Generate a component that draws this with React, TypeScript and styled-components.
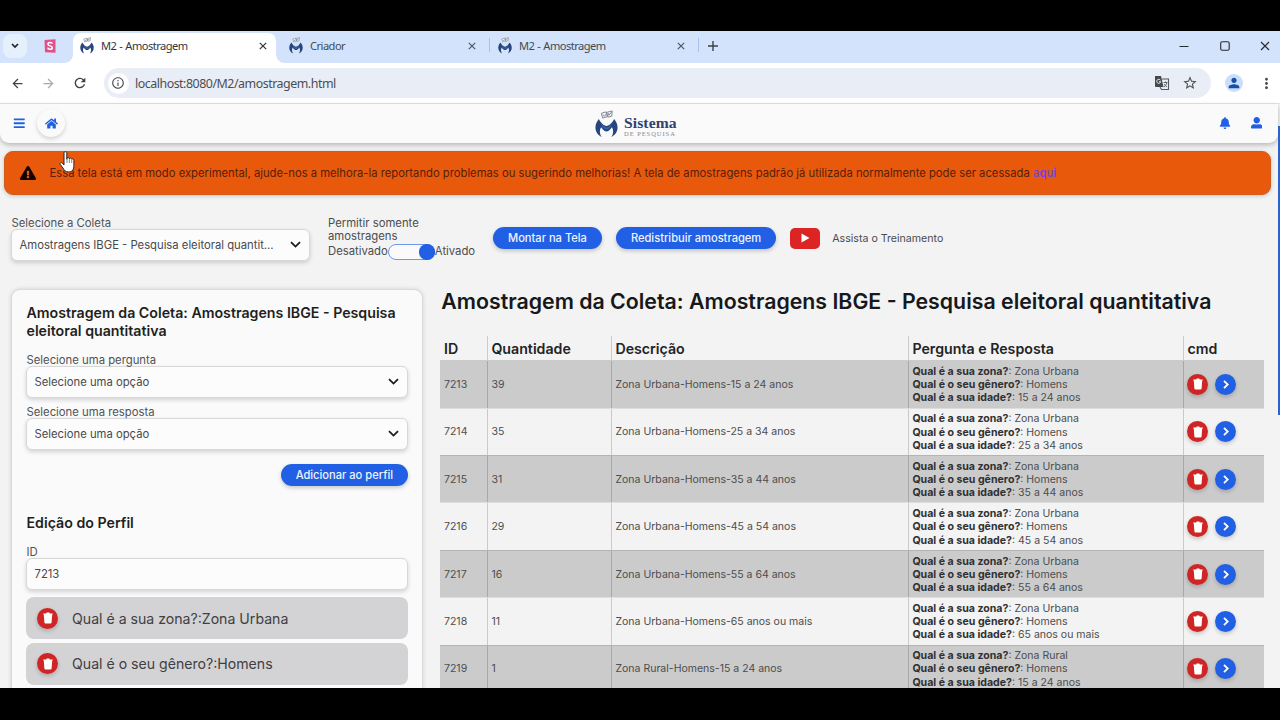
import React from "react";
import styled, { createGlobalStyle, css } from "styled-components";
import { FaBars, FaBell, FaUserAlt, FaHome, FaExclamationTriangle } from "react-icons/fa";
import { MdStarBorder, MdPerson, MdMoreVert, MdArrowBack, MdArrowForward, MdRefresh, MdInfoOutline } from "react-icons/md";

const blue = "#2160e4";
const red = "#cf2525";

const GlobalStyle = createGlobalStyle`
  * { box-sizing: border-box; }
  body { margin: 0; background: #000; overflow: hidden; }
`;

const Screen = styled.div`
  width: 1280px;
  height: 720px;
  padding: 31px 0 32px;
  background: #000;
  overflow: hidden;
  position: relative;
  font-family: Inter, "Liberation Sans", sans-serif;
`;

const Browser = styled.div`
  height: 657px;
  overflow: hidden;
  background: #f3f3f3;
  display: flex;
  flex-direction: column;
`;

const TabStrip = styled.div`
  height: 32px;
  flex: none;
  background: #d3e3fb;
  display: flex;
  align-items: center;
  padding-left: 3px;
  font: 11.1px "Noto Sans", "Open Sans", sans-serif;
  letter-spacing: -0.52px;
  word-spacing: 0.6px;
  color: #454a52;
`;

const TabSearch = styled.div`
  width: 24px;
  height: 24px;
  margin-top: -3px;
  border-radius: 8px;
  background: #e6effc;
  display: grid;
  place-items: center;
`;

const PinnedTab = styled.div`
  width: 46px;
  display: flex;
  justify-content: center;
  margin-top: -3px;
`;

const Tab = styled.div<{ $w: number; $left?: number; $active?: boolean }>`
  width: ${(p) => p.$w}px;
  height: 32px;
  padding: 0 13px 3px ${(p) => p.$left ?? 8}px;
  display: flex;
  align-items: center;
  position: relative;
  ${(p) =>
    p.$active &&
    css`
      height: 30px;
      align-self: flex-end;
      padding-right: 9px;
      padding-bottom: 5px;
      background: #fff;
      border-radius: 8px 8px 0 0;
      color: #33373c;
      &::before, &::after {
        content: "";
        position: absolute;
        bottom: 0;
        width: 8px;
        height: 8px;
      }
      &::before { left: -8px; background: radial-gradient(circle at 0 0, #d3e3fb 7.5px, #fff 8px); }
      &::after { right: -8px; background: radial-gradient(circle at 100% 0, #d3e3fb 7.5px, #fff 8px); }
    `}
`;

const TabTitle = styled.span`
  flex: 1;
  margin-left: 7px;
  white-space: nowrap;
`;

const TabDivider = styled.div`
  width: 1px;
  height: 14px;
  margin-top: -4px;
  background: #a5c3ef;
`;

const NewTab = styled.div`
  width: 28px;
  height: 14px;
  margin-top: -3px;
  display: grid;
  place-items: center;
`;

const WindowButtons = styled.div`
  margin-left: auto;
  margin-top: -3px;
  width: 101px;
  padding-right: 10px;
  display: flex;
  align-items: center;
  justify-content: space-between;
`;

const AddressRow = styled.div`
  height: 41px;
  flex: none;
  background: #fff;
  border-bottom: 1px solid #e4e4e4;
  display: flex;
  align-items: center;
  padding: 0 5px 0 9px;
  color: #474a4d;
`;

const NavIcon = styled.div<{ $dim?: boolean }>`
  width: 16px;
  flex: none;
  margin-right: 15.5px;
  display: grid;
  place-items: center;
  color: ${(p) => (p.$dim ? "#a8aaad" : "#3f4245")};
`;

const AddressBar = styled.div`
  width: 1107px;
  flex: none;
  height: 30px;
  border-radius: 15px;
  background: #e9edf5;
  display: flex;
  align-items: center;
  padding: 0 12.5px 0 4px;
  font: 12.4px "Noto Sans", "Open Sans", sans-serif;
  letter-spacing: -0.47px;
  color: #4b4f54;
`;

const SiteInfo = styled.div`
  width: 21px;
  height: 21px;
  border-radius: 50%;
  background: #fff;
  display: grid;
  place-items: center;
  margin-right: 6.5px;
`;

const Url = styled.span`
  flex: 1;
`;

const AddressIcons = styled.div`
  display: flex;
  gap: 12px;
  align-items: center;
`;

const Avatar = styled.div`
  width: 18px;
  height: 18px;
  flex: none;
  margin: 0 14.5px 0 14.5px;
  border-radius: 50%;
  background: #c9defb;
  color: #174fa8;
  display: grid;
  place-items: center;
`;

const AppHeader = styled.header`
  width: 1278px;
  height: 39px;
  flex: none;
  background: #fafafa;
  border-radius: 0 0 9px 9px;
  box-shadow: 0 2px 5px rgba(0, 0, 0, 0.25);
  display: grid;
  grid-template-columns: 1fr auto 1fr;
  align-items: center;
  padding: 0 16px 0 13px;
  color: ${blue};
`;

const HeaderGroup = styled.div<{ $end?: boolean }>`
  display: flex;
  align-items: center;
  padding-bottom: 1px;
  gap: ${(p) => (p.$end ? 20 : 11.5)}px;
  justify-content: ${(p) => (p.$end ? "flex-end" : "flex-start")};
`;

const HomeButton = styled.div`
  width: 28px;
  height: 28px;
  border-radius: 50%;
  background: #fafafa;
  box-shadow: 0 2px 4px rgba(0, 0, 0, 0.16);
  display: grid;
  place-items: center;
`;

const Brand = styled.div`
  display: flex;
  align-items: center;
  gap: 6px;
  margin-right: 3px;
`;

const BrandText = styled.div`
  padding-top: 5px;
  width: 53px;
`;

const BrandName = styled.div`
  font: bold 15.6px/14px "Liberation Serif", serif;
  letter-spacing: 0.1px;
  color: #2e4270;
`;

const BrandSub = styled.div`
  font: 6.5px/7px "Liberation Serif", serif;
  letter-spacing: 0.95px;
  color: #85888f;
  white-space: nowrap;
`;

const Alert = styled.div`
  width: 1267px;
  height: 44px;
  flex: none;
  margin: 8px 0 0 4px;
  padding: 0 14.5px;
  border: 1px solid #cf5c1d;
  border-radius: 9px;
  background: #e9590c;
  box-shadow: 0 1px 4px rgba(0, 0, 0, 0.2);
  display: flex;
  align-items: center;
  gap: 14px;
  font-size: 11.25px;
  color: #56200a;
  white-space: nowrap;
`;

const AlertLink = styled.a`
  color: #7645d6;
  font-weight: 600;
`;

const Filters = styled.section`
  height: 94px;
  flex: none;
  display: flex;
  padding: 20px 11px 0;
  font-size: 11.3px;
  color: #4a4c4f;
`;

const Field = styled.div<{ $w: number; $mt?: number }>`
  width: ${(p) => p.$w}px;
  margin-top: ${(p) => p.$mt ?? 0}px;
`;

const Label = styled.div`
  height: 14px;
  padding: 1px 0 0 0.5px;
  font-size: 11.3px;
  line-height: 14px;
  color: #505254;
`;

const Control = styled.div`
  height: 32px;
  border: 1px solid #d8d8d8;
  border-radius: 6px;
  background: #fcfcfc;
  box-shadow: 0 2px 4px rgba(0, 0, 0, 0.16);
  display: flex;
  align-items: center;
  justify-content: space-between;
  padding: 0 8px 1px 7.5px;
  font-size: 11.28px;
  color: #48494b;
  white-space: nowrap;
`;

const ToggleField = styled.div`
  width: 165px;
  margin-left: 18px;
  line-height: 13.2px;
  padding-top: 2px;
`;

const ToggleRow = styled.div`
  display: flex;
  align-items: center;
  height: 17px;
`;

const Switch = styled.div`
  width: 47px;
  height: 15.5px;
  border: 1px solid #6d98ec;
  border-radius: 8px;
  background: #fafafa;
  display: flex;
  justify-content: flex-end;
  align-items: center;
`;

const Knob = styled.div`
  width: 15.5px;
  height: 15.5px;
  flex: none;
  border-radius: 50%;
  margin-right: -1px;
  background: ${blue};
`;

const Button = styled.button`
  height: 22px;
  border: 0;
  border-radius: 11px;
  padding: 0 15px;
  background: ${blue};
  box-shadow: 0 2px 4px rgba(0, 0, 0, 0.2);
  color: #eef3fd;
  font: 500 11.12px Inter, sans-serif;
  white-space: nowrap;
`;

const Actions = styled.div`
  height: 22px;
  margin-top: 12px;
  display: flex;
  align-items: center;
  gap: 14px;
`;

const Training = styled.div`
  display: flex;
  align-items: center;
  gap: 12px;
  font-size: 10.62px;
`;

const Youtube = styled.div`
  width: 30px;
  height: 21px;
  border-radius: 5px;
  background: #dc2424;
  display: grid;
  place-items: center;
`;

const Columns = styled.div`
  display: flex;
  align-items: flex-start;
  padding-left: 11px;
`;

const Card = styled.aside`
  width: 412px;
  height: 460px;
  border: 1px solid #dadada;
  border-radius: 9px;
  background: #fafafa;
  box-shadow: 0 0 4px rgba(0, 0, 0, 0.14);
  padding: 14px;
`;

const CardTitle = styled.h3<{ $mt?: number }>`
  margin: ${(p) => p.$mt ?? 0}px 0 0;
  padding-left: 0.5px;
  font-size: 14.2px;
  line-height: 17.6px;
  font-weight: 600;
  color: #1e1f21;
`;

const ButtonLine = styled.div`
  margin-top: 14px;
  display: flex;
  justify-content: flex-end;
`;

const ProfileItem = styled.div<{ $mt?: number }>`
  height: 42px;
  margin-top: ${(p) => p.$mt ?? 3.6}px;
  border-radius: 8px;
  background: #d3d3d5;
  display: flex;
  align-items: center;
  gap: 14px;
  padding-left: 11px;
  font-size: 14.12px;
  color: #3f4042;
`;

const Round = styled.div<{ $color: string }>`
  width: 21px;
  height: 21px;
  border-radius: 50%;
  flex: none;
  background: ${(p) => p.$color};
  box-shadow: 0 2px 4px rgba(0, 0, 0, 0.2);
  color: #fff;
  display: grid;
  place-items: center;
`;

const Main = styled.main`
  width: 824px;
  margin-left: 17px;
`;

const Title = styled.h2`
  margin: 0 0 0 1.3px;
  height: 47px;
  font-size: 21.32px;
  line-height: 25px;
  font-weight: 600;
  color: #17181a;
  white-space: nowrap;
`;

const Row = styled.div<{ $shade?: boolean; $head?: boolean; $first?: boolean }>`
  display: grid;
  grid-template-columns: 47px 124px 297px 275px 1fr;
  height: ${(p) => (p.$head ? 24.3 : 47.4)}px;
  background: ${(p) => (p.$shade ? "#cbcbcb" : "transparent")};
  border-top: ${(p) => (p.$head ? 0 : 1)}px solid
    ${(p) => (p.$first ? "#cbcbcb" : p.$shade ? "#b4b4b4" : "#dedede")};
  font-size: ${(p) => (p.$head ? 14.2 : 10.53)}px;
  font-weight: ${(p) => (p.$head ? 600 : 400)};
  color: ${(p) => (p.$head ? "#222325" : "#4c4d4f")};
`;

const Cell = styled.div`
  display: flex;
  align-items: center;
  padding-left: 4px;
  gap: 7px;
  white-space: nowrap;
  & + & { border-left: 1px solid rgba(0, 0, 0, 0.17); padding-left: 3.4px; }
`;

const Answers = styled.div`
  line-height: 13.2px;
  padding-top: 0.5px;
  b { font-weight: 700; color: #303133; font-size: 10.6px; }
`;

const ScrollThumb = styled.div`
  position: absolute;
  right: 0;
  top: 126px;
  width: 2px;
  height: 289px;
  background: #2b62d2;
`;

const Pointer = styled.svg`
  position: absolute;
  left: 59px;
  top: 151px;
`;

const Mark = ({ size = 14 }: { size?: number }) => (
  <svg width={size} height={size * 1.2} viewBox="0 0 24 29">
    <g fill="#f4f5f8" stroke="#7d8391" strokeWidth="1">
      <path d="M6.500 3.500l5-1.500 1.500 5-5 1.500zM12 2.500l6-1.500-.5 5.500-4 1z" />
      <path d="M8 5l2 1.500L12 4M13.500 3l1 2.500L17.500 2" fill="none" />
    </g>
    <path
      d="M4 9.500C-1 15-1.500 24 7 28.500 4.500 25 4.500 21 6.300 18 8.300 21 10.500 22.500 12 22.500s3.700-1.500 5.700-4.500c1.800 3 1.800 7-.7 10.500C25.500 24 25 15 20 9.500 18 13.500 15 16.500 12 16.800 9 16.500 6 13.500 4 9.500z"
      fill="#27447f"
    />
    <path d="M6.500 14.500c2 2.500 4 3.800 5.500 3.800s3.500-1.300 5.500-3.800c-.8 3.500-3 6-5.500 6s-4.700-2.500-5.500-6z" fill="#2f68aa" />
  </svg>
);

const CloseX = ({ size = 8, color = "#303439", w = 1.5 }) => (
  <svg width={size} height={size} viewBox="0 0 10 10" stroke={color} strokeWidth={w}>
    <path d="M1 1l8 8M9 1L1 9" />
  </svg>
);

const Chevron = ({ size = 11 }: { size?: number }) => (
  <svg width={size} height={size * 0.64} viewBox="0 0 11 7" fill="none" stroke="#1c1d1f" strokeWidth="1.8">
    <path d="M1 1l4.500 4.500L10 1" />
  </svg>
);

const Translate = () => (
  <svg width="16" height="16" viewBox="0 0 16 16" fill="none">
    <path d="M8 4h6.500v10.500H7.500L6 12" stroke="#55585c" strokeWidth="1.100" />
    <path d="M1 1h6l2.500 11H2a1 1 0 0 1-1-1z" fill="#45484c" />
    <path d="M6.400 5.200a2 2 0 1 0 .3 1.500H5" stroke="#e9edf5" strokeWidth="1" />
    <path d="M9.500 7.500h4M11.500 6.500v1M12.800 7.500c-.4 2-1.500 3.500-3 4.500M10.300 9c.6 1.300 1.500 2.200 2.700 3" stroke="#55585c" strokeWidth=".9" />
  </svg>
);

const Delete = () => (
  <Round $color={red}>
    <svg width="10" height="12" viewBox="0 0 10 12" fill="#fff">
      <path d="M.3 1.400h2.900L3.700.6h2.600l.5.800h2.900v1.200H9.200l-.6 7.900c-.1.700-.5 1.100-1.200 1.100H2.600c-.7 0-1.100-.4-1.200-1.100L.8 2.600H.3z" />
    </svg>
  </Round>
);

const Open = () => (
  <Round $color={blue}>
    <svg width="6" height="9" viewBox="0 0 6 9" fill="none" stroke="#fff" strokeWidth="1.800">
      <path d="M1 .8l3.700 3.700L1 8.200" />
    </svg>
  </Round>
);

const rows = [
  { id: 7213, qty: 39, zone: "Urbana", age: "15 a 24 anos" },
  { id: 7214, qty: 35, zone: "Urbana", age: "25 a 34 anos" },
  { id: 7215, qty: 31, zone: "Urbana", age: "35 a 44 anos" },
  { id: 7216, qty: 29, zone: "Urbana", age: "45 a 54 anos" },
  { id: 7217, qty: 16, zone: "Urbana", age: "55 a 64 anos" },
  { id: 7218, qty: 11, zone: "Urbana", age: "65 anos ou mais" },
  { id: 7219, qty: 1, zone: "Rural", age: "15 a 24 anos" },
];

export default function App() {
  return (
    <Screen>
      <GlobalStyle />
      <Browser>
        <TabStrip>
          <TabSearch>
            <svg width="8" height="6" viewBox="0 0 8 6" fill="none" stroke="#202429" strokeWidth="1.700">
              <path d="M1 1l3 3 3-3" />
            </svg>
          </TabSearch>
          <PinnedTab>
            <svg width="12" height="14" viewBox="0 0 12 14">
              <path d="M.5 1L11.500.3v13.400L1 13.200z" fill="#e2508a" />
              <path d="M8.300 4.600C7.800 3 3.900 3 3.900 5.200c0 2 4.400 1.400 4.400 3.500 0 2.100-4.200 2.100-4.600 0" fill="none" stroke="#fff" strokeWidth="1.500" />
            </svg>
          </PinnedTab>
          <Tab $w={203} $left={7} $active>
            <Mark />
            <TabTitle>M2 - Amostragem</TabTitle>
            <CloseX />
          </Tab>
          <Tab $w={213} $left={13}>
            <Mark />
            <TabTitle>Criador</TabTitle>
            <CloseX color="#50565f" />
          </Tab>
          <TabDivider />
          <Tab $w={208}>
            <Mark />
            <TabTitle>M2 - Amostragem</TabTitle>
            <CloseX color="#50565f" />
          </Tab>
          <TabDivider />
          <NewTab>
            <svg width="10" height="10" viewBox="0 0 10 10" stroke="#3c4148" strokeWidth="1.400">
              <path d="M5 0v10M0 5h10" />
            </svg>
          </NewTab>
          <WindowButtons>
            <svg width="10" height="10" viewBox="0 0 10 10" stroke="#25292e" strokeWidth="1">
              <path d="M.5 5.500h9" />
            </svg>
            <svg width="10" height="10" viewBox="0 0 10 10" fill="none" stroke="#25292e" strokeWidth="1.100">
              <rect x=".7" y=".7" width="8.500" height="8.500" rx="1.500" />
            </svg>
            <CloseX size={10} color="#25292e" w={1.1} />
          </WindowButtons>
        </TabStrip>
        <AddressRow>
          <NavIcon><MdArrowBack size={15} /></NavIcon>
          <NavIcon $dim><MdArrowForward size={15} /></NavIcon>
          <NavIcon><MdRefresh size={16} /></NavIcon>
          <AddressBar>
            <SiteInfo><MdInfoOutline size={14} /></SiteInfo>
            <Url>localhost:8080/M2/amostragem.html</Url>
            <AddressIcons>
              <Translate />
              <MdStarBorder size={16} />
            </AddressIcons>
          </AddressBar>
          <Avatar><MdPerson size={16} /></Avatar>
          <MdMoreVert size={17} />
        </AddressRow>

        <AppHeader>
          <HeaderGroup>
            <FaBars size={12.5} />
            <HomeButton><FaHome size={13} /></HomeButton>
          </HeaderGroup>
          <Brand>
            <Mark size={23} />
            <BrandText>
              <BrandName>Sistema</BrandName>
              <BrandSub>DE PESQUISA</BrandSub>
            </BrandText>
          </Brand>
          <HeaderGroup $end>
            <FaBell size={12} />
            <FaUserAlt size={11.5} />
          </HeaderGroup>
        </AppHeader>

        <Alert>
          <FaExclamationTriangle size={16} color="#120500" />
          <span>
            Essa tela está em modo experimental, ajude-nos a melhora-la reportando problemas ou sugerindo melhorias! A tela de
            amostragens padrão já utilizada normalmente pode ser acessada <AlertLink>aqui</AlertLink>
          </span>
        </Alert>

        <Filters>
          <Field $w={299}>
            <Label>Selecione a Coleta</Label>
            <Control>Amostragens IBGE - Pesquisa eleitoral quantit... <Chevron /></Control>
          </Field>
          <ToggleField>
            Permitir somente
            <br />
            amostragens
            <ToggleRow>
              Desativado
              <Switch><Knob /></Switch>
              Ativado
            </ToggleRow>
          </ToggleField>
          <Actions>
            <Button>Montar na Tela</Button>
            <Button>Redistribuir amostragem</Button>
            <Training>
              <Youtube>
                <svg width="9" height="10" viewBox="0 0 9 10" fill="#fff"><path d="M.5.5L8.500 5 .5 9.500z" /></svg>
              </Youtube>
              Assista o Treinamento
            </Training>
          </Actions>
        </Filters>

        <Columns>
          <Card>
            <CardTitle>Amostragem da Coleta: Amostragens IBGE - Pesquisa eleitoral quantitativa</CardTitle>
            <Field $w={382} $mt={13}>
              <Label>Selecione uma pergunta</Label>
              <Control>Selecione uma opção <Chevron /></Control>
            </Field>
            <Field $w={382} $mt={6}>
              <Label>Selecione uma resposta</Label>
              <Control>Selecione uma opção <Chevron /></Control>
            </Field>
            <ButtonLine><Button>Adicionar ao perfil</Button></ButtonLine>
            <CardTitle $mt={28}>Edição do Perfil</CardTitle>
            <Field $w={382} $mt={12.6}>
              <Label>ID</Label>
              <Control>7213</Control>
            </Field>
            <ProfileItem $mt={7}><Delete />Qual é a sua zona?:Zona Urbana</ProfileItem>
            <ProfileItem><Delete />Qual é o seu gênero?:Homens</ProfileItem>
          </Card>
          <Main>
            <Title>Amostragem da Coleta: Amostragens IBGE - Pesquisa eleitoral quantitativa</Title>
            <Row $head>
              <Cell>ID</Cell>
              <Cell>Quantidade</Cell>
              <Cell>Descrição</Cell>
              <Cell>Pergunta e Resposta</Cell>
              <Cell>cmd</Cell>
            </Row>
            {rows.map((r, i) => (
              <Row key={r.id} $shade={i % 2 === 0} $first={i === 0}>
                <Cell>{r.id}</Cell>
                <Cell>{r.qty}</Cell>
                <Cell>Zona {r.zone}-Homens-{r.age}</Cell>
                <Cell>
                  <Answers>
                    <b>Qual é a sua zona?</b>: Zona {r.zone}<br />
                    <b>Qual é o seu gênero?</b>: Homens<br />
                    <b>Qual é a sua idade?</b>: {r.age}
                  </Answers>
                </Cell>
                <Cell><Delete /><Open /></Cell>
              </Row>
            ))}
          </Main>
        </Columns>
      </Browser>
      <ScrollThumb />
      <Pointer width="17" height="23" viewBox="0 0 17 23">
        <path
          d="M5 2.200c0-2 2.800-2 2.800 0v6l.2-1c.4-1 2.300-.8 2.400.5.500-1 2.200-.7 2.300.6.600-.8 2.200-.3 2.200 1v5c0 4-1.500 6.700-5 6.700-3.400 0-4.500-1.500-6-4L1.200 13.300c-.7-1.500 1-2.300 2-1.200L5 14z"
          fill="#fff" stroke="#2b2320" strokeWidth="1"
        />
        <path d="M8 8v4M10.400 8v4M12.700 9v3" stroke="#555" strokeWidth=".7" />
      </Pointer>
    </Screen>
  );
}
